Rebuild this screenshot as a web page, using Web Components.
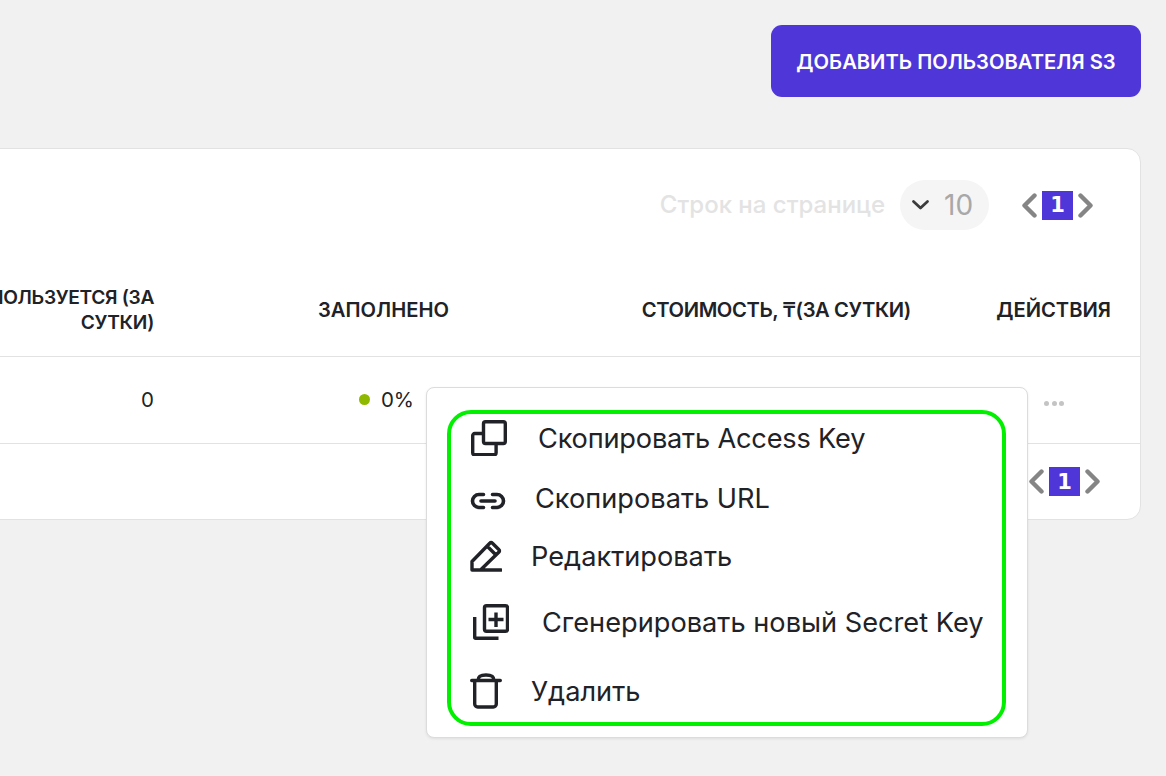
<!DOCTYPE html>
<html lang="ru">
<head>
<meta charset="utf-8">
<title>Пользователи S3</title>
<style>
  html, body { margin: 0; height: 100%; background: #f1f1f1; }
  body { font-family: Inter, "Noto Sans", sans-serif; color: #212227; overflow: hidden; }
</style>
</head>
<body>
<s3-page>
  <s3-button slot="actions">ДОБАВИТЬ ПОЛЬЗОВАТЕЛЯ S3</s3-button>
  <s3-card>
    <s3-toolbar slot="top"></s3-toolbar>
    <s3-table></s3-table>
    <s3-pager slot="bottom"></s3-pager>
    <s3-menu slot="overlay">
      <s3-menu-item h="48" pad="20" gap="31" label="Скопировать Access Key" style="letter-spacing: -.2px">
        <svg width="36" height="36" viewBox="0 0 36 36" fill="none" stroke="currentColor" stroke-width="3.400" stroke-linejoin="round"><rect x="12.500" y="1.700" width="21.800" height="21.800" rx="2"/><path d="M12.500 13.500H3.700a2 2 0 0 0-2 2v17.300a2 2 0 0 0 2 2h19.400a2 2 0 0 0 2-2v-9.300"/></svg>
      </s3-menu-item>
      <s3-menu-item h="72" pad="19" gap="29" label="Скопировать URL" style="--icon-top: 6px">
        <svg width="36" height="18" viewBox="0 0 36 18" fill="none" stroke="currentColor" stroke-width="3.600" stroke-linecap="round"><path d="M13.500 2.500H9a6.500 6.500 0 0 0 0 13h4.500M22.500 2.500H27a6.500 6.500 0 0 1 0 13h-4.500M11 9h14"/></svg>
      </s3-menu-item>
      <s3-menu-item h="44" pad="19" gap="29" label="Редактировать">
        <svg width="32" height="32" viewBox="0 0 32 32" fill="none" stroke="currentColor" stroke-width="3.400" stroke-linejoin="round" stroke-linecap="round"><path d="M2 30V21.500L20 3a1.500 1.500 0 0 1 2.200 0l6.800 6.800a1.500 1.500 0 0 1 0 2.200L10.500 30H2M17 6 26 15M10.500 30H31"/></svg>
      </s3-menu-item>
      <s3-menu-item h="88" pad="22" gap="33" label="Сгенерировать новый Secret Key">
        <svg width="36" height="36" viewBox="0 0 36 36" fill="none" stroke="currentColor" stroke-width="3.400" stroke-linejoin="round"><rect x="11.500" y="1.700" width="23" height="25.600" rx="2"/><path d="M1.700 13v20.300a1 1 0 0 0 1 1h22.800M23 8.500v14.500M15.500 15.500h15"/></svg>
      </s3-menu-item>
      <s3-menu-item h="50" pad="19" gap="29" label="Удалить">
        <svg width="32" height="36" viewBox="0 0 32 36" fill="none" stroke="currentColor" stroke-width="3.400" stroke-linejoin="round" stroke-linecap="round"><path d="M1.700 7.500h28.600M4.700 7.500V31a3 3 0 0 0 3 3h15.600a3 3 0 0 0 3-3V7.500M8 7.500C8 3 11 2 16 2s8 1 8 5.500"/></svg>
      </s3-menu-item>
    </s3-menu>
  </s3-card>
</s3-page>
<script>
  function defineEl(name, css, html, extra) {
    customElements.define(
      name,
      class extends HTMLElement {
        constructor() {
          super();
          this.attachShadow({ mode: "open" });
        }
        connectedCallback() {
          this.shadowRoot.innerHTML = `<style>${css}</style>${typeof html === "function" ? html(this) : html}`;
          if (extra) extra(this);
        }
      }
    );
  }

  defineEl("s3-page", `
    :host { display: block; padding: 25px 25px 0 0; height: 776px; box-sizing: border-box; overflow: hidden; }
    .actions { display: flex; justify-content: flex-end; margin-bottom: 51px; }
    .content { display: flex; justify-content: flex-end; }
  `, `
    <div class="actions"><slot name="actions"></slot></div>
    <div class="content"><slot></slot></div>
  `);

  defineEl("s3-button", `
    :host { display: flex; align-items: center; justify-content: center; width: 370px; height: 72px; background: #4f36d8; border-radius: 11px; color: #fff; font: 600 20.200px Inter, sans-serif; white-space: nowrap; }
  `, `<slot></slot>`);

  defineEl("s3-card", `
    :host { display: block; position: relative; flex: none; width: 1400px; height: 372px; box-sizing: border-box; background: #fff; border: 1px solid #e2e2e2; border-radius: 14px; }
    .top { display: flex; justify-content: flex-end; height: 121px; padding-right: 47px; box-sizing: border-box; }
    .bottom { display: flex; justify-content: flex-end; padding: 23px 40px 0 0; }
  `, `
    <div class="top"><slot name="top"></slot></div>
    <slot></slot>
    <div class="bottom"><slot name="bottom"></slot></div>
    <slot name="overlay"></slot>
  `);

  defineEl("s3-pager", `
    :host { display: flex; align-items: center; gap: 5px; }
    svg { display: block; }
    .cur { display: flex; align-items: center; justify-content: center; width: 31px; height: 29px; background: #4f36d8; color: #fff; font: 700 21px "DejaVu Sans", Inter, sans-serif; }
  `, `
    <svg width="15" height="25" viewBox="0 0 15 25" fill="none" stroke="#858585" stroke-width="4.400" stroke-linecap="round" stroke-linejoin="round"><path d="M12.500 2.500 2.500 12.500l10 10"/></svg>
    <div class="cur">1</div>
    <svg width="15" height="25" viewBox="0 0 15 25" fill="none" stroke="#858585" stroke-width="4.400" stroke-linecap="round" stroke-linejoin="round"><path d="M2.500 2.500l10 10-10 10"/></svg>
  `);

  defineEl("s3-toolbar", `
    :host { display: flex; align-items: flex-start; padding-top: 31px; }
    .label { color: #e3e3e3; font: 500 24px/50px Inter, sans-serif; margin-right: 15px; }
    .select { display: flex; align-items: center; width: 89px; height: 50px; background: #f5f5f5; border-radius: 25px; padding-left: 11px; box-sizing: border-box; color: #a8a8a8; font: 400 28px Inter, sans-serif; gap: 14px; margin-right: 33px; }
    svg { display: block; }
    s3-pager { height: 50px; }
  `, `
    <div class="label">Строк на странице</div>
    <div class="select">
      <svg width="19" height="12" viewBox="0 0 19 12" fill="none" stroke="#3c3c3c" stroke-width="2.800" stroke-linecap="round" stroke-linejoin="round"><path d="M2.500 2.500 9.500 9l7-6.500"/></svg>
      <span>10</span>
    </div>
    <s3-pager></s3-pager>
  `);

  defineEl("s3-table", `
    :host { display: block; }
    .row { display: grid; grid-template-columns: 1fr 200px 295px 462px 200px; padding-right: 29px; border-bottom: 1px solid #e2e2e2; align-items: center; text-align: right; height: 87px; box-sizing: border-box; }
    .head { font: 600 20.200px/25px Inter, sans-serif; color: #212227; padding-bottom: 7px; }
    .used { font-size: 19.200px; letter-spacing: -.35px; }
    .cost { letter-spacing: -.4px; }
    .body { font: 400 20.500px Inter, sans-serif; color: #212227; padding-bottom: 2px; }
    .fill { display: flex; justify-content: flex-end; align-items: center; gap: 11px; padding-right: 35px; }
    .dot { width: 11px; height: 11px; border-radius: 50%; background: #8fb900; }
    .more { display: flex; justify-content: center; gap: 2.500px; padding: 8px 0 0 86px; }
    .more i { width: 5px; height: 5px; border-radius: 50%; background: #c4c4c4; }
  `, `
    <div class="row head">
      <div></div>
      <div class="used">ИСПОЛЬЗУЕТСЯ (ЗА СУТКИ)</div>
      <div>ЗАПОЛНЕНО</div>
      <div class="cost">СТОИМОСТЬ, ₸(ЗА СУТКИ)</div>
      <div>ДЕЙСТВИЯ</div>
    </div>
    <div class="row body">
      <div></div>
      <div>0</div>
      <div class="fill"><span class="dot"></span><span>0%</span></div>
      <div></div>
      <div class="more"><i></i><i></i><i></i></div>
    </div>
  `);

  defineEl("s3-menu", `
    :host { display: block; position: absolute; right: 112px; top: 238px; width: 602px; height: 351px; box-sizing: border-box; background: #fff; border: 1px solid #dcdcdc; border-radius: 8px; box-shadow: 0 1px 3px rgba(0,0,0,.08); padding: 22px 21px 12px 20px; }
    .list { box-sizing: border-box; height: 316px; border: 4px solid #00f000; border-radius: 24px; }
  `, `<div class="list"><slot></slot></div>`);

  defineEl("s3-menu-item", `
    :host { display: flex; align-items: center; font: 400 27.200px Inter, sans-serif; color: #212227; white-space: nowrap; }
    ::slotted(svg) { display: block; flex: none; margin-top: var(--icon-top, 0); }
  `, (el) => `<slot></slot><span>${el.getAttribute("label")}</span>`, (el) => {
    el.style.height = el.getAttribute("h") + "px";
    el.style.paddingLeft = el.getAttribute("pad") + "px";
    el.style.gap = el.getAttribute("gap") + "px";
  });
</script>
</body>
</html>
